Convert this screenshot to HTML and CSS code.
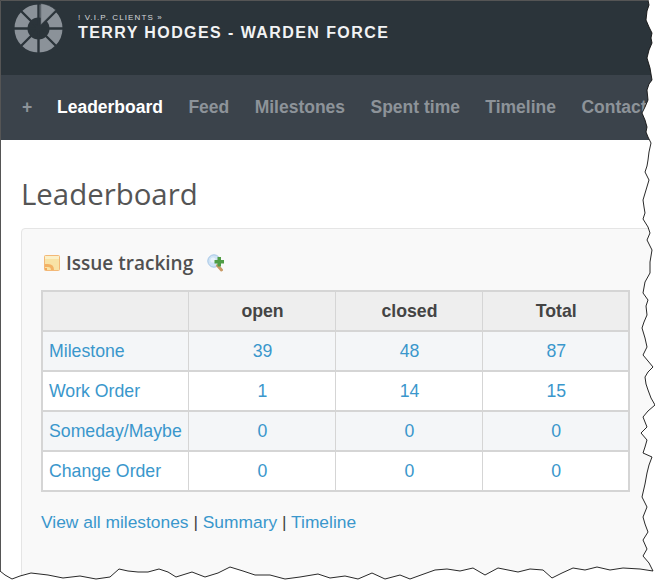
FILE: index.html
```html
<!DOCTYPE html>
<html lang="en">
<head>
<meta charset="utf-8">
<title>Leaderboard</title>
<link rel="stylesheet" href="styles.css">
</head>
<body>
<div class="page">
  <header class="top">
    <svg class="logo" width="50" height="50" viewBox="0 0 50 50">
      <circle class="ring" cx="24.5" cy="25.5" r="17.5"/>
      <path class="cut" d="M0 25.5H50M24.5 0V50M4 5L45 46M45 5L4 46"/>
      <path class="wedge" d="M26.7 0.5A25 25 0 0 1 41.7 7L26.7 22Z"/>
    </svg>
    <div class="brand">
      <span class="crumb">! V.I.P. CLIENTS »</span>
      <span class="project">TERRY HODGES - WARDEN FORCE</span>
    </div>
  </header>
  <nav class="nav">
    <a class="plus">+</a>
    <a class="active">Leaderboard</a>
    <a>Feed</a>
    <a>Milestones</a>
    <a>Spent time</a>
    <a>Timeline</a>
    <a>Contacts</a>
  </nav>
  <main class="main">
    <h1 class="title">Leaderboard</h1>
    <section class="card">
      <h2 class="subtitle">
        <svg class="ico" width="16" height="16" viewBox="0 0 16 16">
          <rect x="0.5" y="0.5" width="15" height="15" rx="1" fill="#f8e3a6" stroke="#f3b877"/>
          <path d="M1 1h14v3H1Z" fill="#fbf0c8"/>
          <path d="M1 9h3q6 0 6 6H7q0-3-3-3H1Z" fill="#f3b265"/>
          <path d="M1 13h2v2H1Z" fill="#f3a85a"/>
        </svg>
        <span>Issue tracking</span>
        <svg class="ico add" width="18" height="18" viewBox="0 0 18 18">
          <circle cx="7" cy="7" r="6.2" fill="#cfe3f5" stroke="#a5c6e6"/>
          <circle cx="6" cy="6" r="2.6" fill="#e8f2fb"/>
          <path d="M10.5 11.5l4 4.5" stroke="#c99a66" stroke-width="3" stroke-linecap="round"/>
          <path d="M10.5 3h3.5v3h3v3.5h-3v3h-3.5v-3h-3V6h3Z" fill="#4f9d45"/>
        </svg>
      </h2>
      <table class="stats">
        <thead>
          <tr><th></th><th>open</th><th>closed</th><th>Total</th></tr>
        </thead>
        <tbody>
          <tr class="odd"><td class="name"><a>Milestone</a></td><td><a>39</a></td><td><a>48</a></td><td><a>87</a></td></tr>
          <tr><td class="name"><a>Work Order</a></td><td><a>1</a></td><td><a>14</a></td><td><a>15</a></td></tr>
          <tr class="odd"><td class="name"><a>Someday/Maybe</a></td><td><a>0</a></td><td><a>0</a></td><td><a>0</a></td></tr>
          <tr><td class="name"><a>Change Order</a></td><td><a>0</a></td><td><a>0</a></td><td><a>0</a></td></tr>
        </tbody>
      </table>
      <p class="links"><a>View all milestones</a> | <a>Summary</a> | <a>Timeline</a></p>
    </section>
  </main>
  <svg class="tear" width="655" height="581" viewBox="0 0 655 581">
    <path class="outside" d="M655 0 L648 0 L649 5 L647 11 L646 20 L649 27 L652 33 L651 38 L652 43 L649 50 L647 58 L650 68 L652 80 L649 84 L647 90 L648 100 L645 107 L642 113 L645 120 L647 127 L646 132 L648 137 L651 143 L649 152 L648 160 L647 166 L645 172 L649 180 L646 190 L643 200 L644 207 L645 213 L643 219 L648 227 L650 233 L647 240 L652 250 L650 262 L650 273 L645 282 L643 293 L648 300 L646 306 L647 315 L644 322 L642 328 L645 338 L647 347 L643 355 L648 361 L653 367 L648 372 L645 377 L646 384 L648 390 L651 398 L655 405 L648 411 L643 417 L647 427 L641 433 L647 440 L645 447 L643 453 L652 457 L649 465 L647 473 L645 484 L642 497 L647 507 L643 517 L645 524 L648 532 L643 540 L647 549 L643 556 L649 563 L653 571 L640 569 L623 568 L610 570 L597 567 L585 570 L573 568 L562 573 L552 578 L543 570 L530 569 L518 572 L498 568 L485 575 L473 568 L460 571 L447 569 L435 570 L421 575 L410 579 L400 575 L385 579 L372 573 L358 579 L345 576 L330 578 L318 574 L300 577 L285 579 L270 575 L255 575 L243 571 L230 567 L218 573 L205 577 L192 572 L176 577 L168 572 L159 569 L148 572 L138 572 L128 571 L119 569 L110 577 L96 579 L80 576 L63 578 L48 575 L31 573 L20 576 L12 579 L5 575 L0 571 L0 581 L655 581 Z"/>
    <path class="edge" d="M648 0 L649 5 L647 11 L646 20 L649 27 L652 33 L651 38 L652 43 L649 50 L647 58 L650 68 L652 80 L649 84 L647 90 L648 100 L645 107 L642 113 L645 120 L647 127 L646 132 L648 137 L651 143 L649 152 L648 160 L647 166 L645 172 L649 180 L646 190 L643 200 L644 207 L645 213 L643 219 L648 227 L650 233 L647 240 L652 250 L650 262 L650 273 L645 282 L643 293 L648 300 L646 306 L647 315 L644 322 L642 328 L645 338 L647 347 L643 355 L648 361 L653 367 L648 372 L645 377 L646 384 L648 390 L651 398 L655 405 L648 411 L643 417 L647 427 L641 433 L647 440 L645 447 L643 453 L652 457 L649 465 L647 473 L645 484 L642 497 L647 507 L643 517 L645 524 L648 532 L643 540 L647 549 L643 556 L649 563 L653 571 L640 569 L623 568 L610 570 L597 567 L585 570 L573 568 L562 573 L552 578 L543 570 L530 569 L518 572 L498 568 L485 575 L473 568 L460 571 L447 569 L435 570 L421 575 L410 579 L400 575 L385 579 L372 573 L358 579 L345 576 L330 578 L318 574 L300 577 L285 579 L270 575 L255 575 L243 571 L230 567 L218 573 L205 577 L192 572 L176 577 L168 572 L159 569 L148 572 L138 572 L128 571 L119 569 L110 577 L96 579 L80 576 L63 578 L48 575 L31 573 L20 576 L12 579 L5 575 L0 571"/>
    <path class="frame" d="M0.5 571V0.5H648"/>
  </svg>
</div>
</body>
</html>
```
FILE: styles.css
```css
html, body { margin: 0; padding: 0; background: #fff; }
.page {
  position: relative;
  width: 655px;
  height: 581px;
  overflow: hidden;
  font-family: "Liberation Sans", Arial, sans-serif;
  color: #444;
}
.top {
  height: 75px;
  background: #2b343a;
  display: flex;
  align-items: flex-start;
  box-sizing: border-box;
  padding: 3px 0 0 14px;
}
.logo { flex: none; }
.ring { fill: none; stroke: #8b9299; stroke-width: 13; }
.cut { fill: none; stroke: #2b343a; stroke-width: 2.4; }
.wedge { fill: #8b9299; stroke: #2b343a; stroke-width: 0.6; }
.brand {
  display: flex;
  flex-direction: column;
  margin: 10px 0 0 14px;
}
.crumb {
  font-size: 8px;
  line-height: 9px;
  letter-spacing: 1.1px;
  color: #d5d8da;
}
.project {
  font-size: 16px;
  line-height: 21px;
  font-weight: bold;
  letter-spacing: 1.42px;
  color: #f2f3f4;
}
.nav {
  height: 65px;
  background: #3b434b;
  display: flex;
  align-items: center;
  padding-left: 22px;
  gap: 25.4px;
  font-size: 17.5px;
  font-weight: bold;
  white-space: nowrap;
  color: #8d9399;
}
.nav .active { color: #fff; }
.nav .plus { width: 9.6px; }
.main { padding: 0 0 0 21px; }
.title {
  margin: 0;
  padding-top: 33px;
  font-family: "Open Sans", sans-serif;
  font-size: 29.4px;
  line-height: 43px;
  font-weight: 400;
  color: #555;
}
.card {
  margin-top: 12px;
  width: 700px;
  height: 360px;
  box-sizing: border-box;
  background: #f9f9f9;
  border: 1px solid #e5e5e5;
  border-radius: 4px;
  padding: 20px 0 0 19px;
}
.subtitle {
  display: flex;
  align-items: center;
  margin: 0;
  height: 28px;
  font-family: "Open Sans", sans-serif;
  font-size: 19px;
  font-weight: 600;
  color: #505050;
}
.ico { flex: none; }
.subtitle .ico:first-child { margin: 0 6px 0 3px; }
.subtitle .add { margin-left: 14px; }
.stats {
  margin-top: 13px;
  border-collapse: collapse;
  table-layout: fixed;
  width: 589px;
  border: 2px solid #d5d5d5;
  font-size: 17.7px;
  background: #fff;
}
.stats th, .stats td {
  height: 40px;
  box-sizing: border-box;
  padding: 0 0 0 2px;
  border: 1px solid #d5d5d5;
  border-width: 1px 1px 2px;
  text-align: center;
}
.stats th:first-child, .stats td:first-child { width: 146px; }
.stats th { background: #eee; color: #444; font-weight: bold; }
.stats .odd td { background: #f4f6f8; }
.stats .name { text-align: left; padding-left: 6px; }
.stats a, .links a { color: #3a97cc; }
.links {
  margin: 20px 0 0;
  font-size: 17.4px;
  line-height: 20px;
  color: #444;
}
.tear {
  position: absolute;
  left: 0;
  top: 0;
  pointer-events: none;
}
.outside { fill: #fff; }
.edge { fill: none; stroke: #111; stroke-width: 0.9; }
.frame { fill: none; stroke: #555; stroke-width: 1; }
```
